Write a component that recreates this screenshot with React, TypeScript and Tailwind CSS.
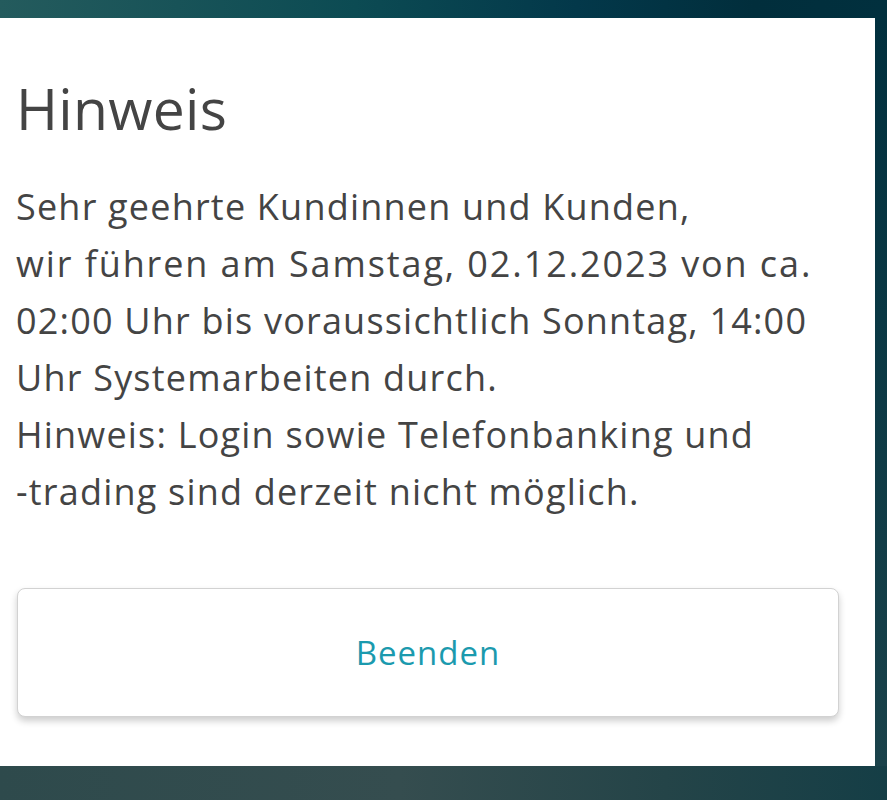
import React from 'react';

const lines = [
  'Sehr geehrte Kundinnen und Kunden,',
  'wir führen am Samstag, 02.12.2023 von ca.',
  '02:00 Uhr bis voraussichtlich Sonntag, 14:00',
  'Uhr Systemarbeiten durch.',
  'Hinweis: Login sowie Telefonbanking und',
  '-trading sind derzeit nicht möglich.',
];

const App: React.FC = () => {
  return (
    <div className="w-[887px] h-[800px] overflow-hidden flex flex-col font-['Open_Sans','Liberation_Sans',sans-serif]">
      {/* top strip of the backdrop */}
      <div className="h-[18px] shrink-0 bg-[linear-gradient(to_right,#245b5d,#0c4b53_40%,#03384a_65%,#012e3c_85%,#01303e)]" />
      <div className="flex h-[748px] shrink-0">
        <div className="flex-1 bg-white rounded-r-[6px] flex flex-col pl-[16px] pr-[36px]">
          <h1 className="mt-[58px] text-[57px] leading-[64px] text-[#444444] font-normal tracking-[0.3px]">Hinweis</h1>
          <div className="mt-[38px] text-[36px] leading-[57px] text-[#444444] tracking-[1.2px]">
            {lines.map((l, i) => (
              <p key={i} className={i === 1 ? 'whitespace-nowrap tracking-[1.9px]' : 'whitespace-nowrap'}>{l}</p>
            ))}
          </div>
          <button className="mt-[68px] ml-[1px] w-[822px] h-[129px] rounded-[8px] border border-[#d2d2d2] bg-white shadow-[0_4px_7px_rgba(0,0,0,0.2)] text-[33px] tracking-[1px] text-[#1b9aae]">
            Beenden
          </button>
        </div>
        <div className="w-[12px] bg-[linear-gradient(to_bottom,#01303e,#0a3844_40%,#1a424a)]" />
      </div>
      <div className="flex-1 bg-[linear-gradient(to_right,#2e4a4c,#354d4f_45%,#244448_75%,#153e46)]" />
    </div>
  );
};

export default App;
